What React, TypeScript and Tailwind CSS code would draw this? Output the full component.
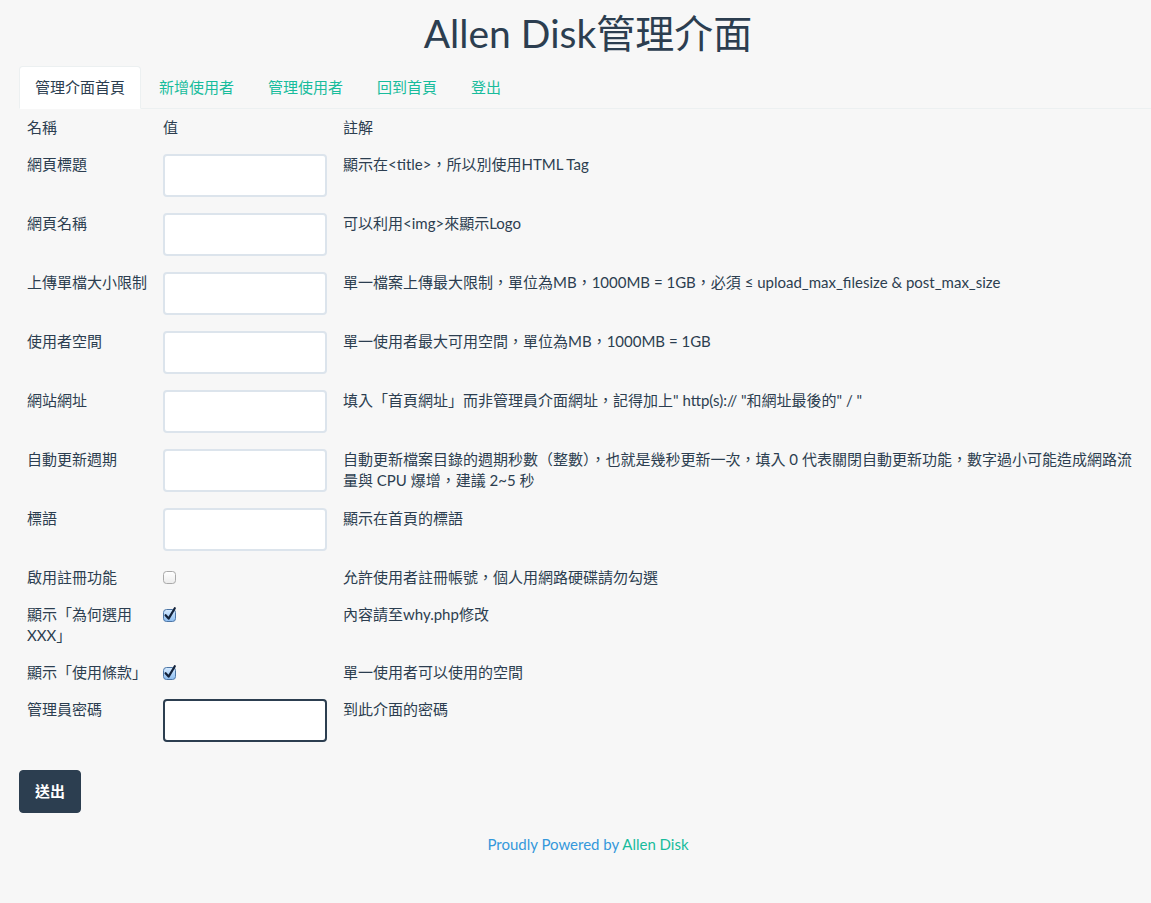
import React from "react";

const font = "font-['Lato','Noto_Sans_CJK_TC','Noto_Sans_CJK_JP',sans-serif]";

function Box({ checked }: { checked: boolean }) {
  if (!checked) {
    return (
      <svg width="14" height="14" viewBox="0 0 14 14" className="mt-[4px]">
        <defs>
          <linearGradient id="ub" x1="0" y1="0" x2="0" y2="1">
            <stop offset="0" stopColor="#ffffff" />
            <stop offset="1" stopColor="#ececec" />
          </linearGradient>
        </defs>
        <rect x="0.5" y="0.5" width="12" height="12" rx="3" fill="url(#ub)" stroke="#a9a9a9" />
      </svg>
    );
  }
  return (
    <svg width="16" height="16" viewBox="0 0 16 16" className="mt-[2px]">
      <defs>
        <linearGradient id="cb" x1="0" y1="0" x2="0" y2="1">
          <stop offset="0" stopColor="#d7ebff" />
          <stop offset="1" stopColor="#8dbdf0" />
        </linearGradient>
      </defs>
      <rect x="0.5" y="3.5" width="12" height="12" rx="3" fill="url(#cb)" stroke="#4d76a6" />
      <path d="M2.6 9.2 L5.6 12.6 L11.8 2.2" fill="none" stroke="#13223a" strokeWidth="2.2" strokeLinecap="round" strokeLinejoin="round" />
    </svg>
  );
}

function Field({ focus }: { focus?: boolean }) {
  return (
    <div
      className={`h-[43px] w-[164px] rounded-[4px] border-2 bg-white ${
        focus ? "border-[#2c3e50]" : "border-[#dce4ec]"
      }`}
    />
  );
}

type Row = {
  label: React.ReactNode;
  value: React.ReactNode;
  note: React.ReactNode;
};

const rows: Row[] = [
  { label: "網頁標題", value: <Field />, note: "顯示在<title>，所以別使用HTML Tag" },
  { label: "網頁名稱", value: <Field />, note: "可以利用<img>來顯示Logo" },
  {
    label: "上傳單檔大小限制",
    value: <Field />,
    note: "單一檔案上傳最大限制，單位為MB，1000MB = 1GB，必須 ≤ upload_max_filesize & post_max_size",
  },
  { label: "使用者空間", value: <Field />, note: "單一使用者最大可用空間，單位為MB，1000MB = 1GB" },
  {
    label: "網站網址",
    value: <Field />,
    note: "填入「首頁網址」而非管理員介面網址，記得加上\" http(s):// \"和網址最後的\" / \"",
  },
  {
    label: "自動更新週期",
    value: <Field />,
    note: (
      <>
        自動更新檔案目錄的週期秒數（整數），也就是幾秒更新一次，填入 0 代表關閉自動更新功能，數字過小可能造成網路流
        <br />
        量與 CPU 爆增，建議 2~5 秒
      </>
    ),
  },
  { label: "標語", value: <Field />, note: "顯示在首頁的標語" },
  { label: "啟用註冊功能", value: <Box checked={false} />, note: "允許使用者註冊帳號，個人用網路硬碟請勿勾選" },
  {
    label: (
      <>
        顯示「為何選用
        <br />
        XXX」
      </>
    ),
    value: <Box checked />,
    note: "內容請至why.php修改",
  },
  { label: "顯示「使用條款」", value: <Box checked />, note: "單一使用者可以使用的空間" },
  { label: "管理員密碼", value: <Field focus />, note: "到此介面的密碼" },
];

const tabs = ["管理介面首頁", "新增使用者", "管理使用者", "回到首頁", "登出"];

export default function App() {
  return (
    <div className={`min-h-[903px] overflow-hidden bg-[#f7f7f7] text-[15px] leading-[21px] text-[#2c3e50] ${font}`}>
      <div className="w-[1138px] pl-[19px] box-content">
        <h1 className="mt-[12px] mb-[11px] text-center text-[39px] leading-[43px] font-normal">
          Allen Disk管理介面
        </h1>

        <ul className="flex border-b border-[#ecf0f1] w-[1132px]">
          {tabs.map((t, i) => (
            <li key={t} className="-mb-px mr-[2px]">
              <a
                className={`block rounded-t-[4px] border px-[15px] py-[10px] ${
                  i === 0
                    ? "border-[#ecf0f1] border-b-transparent bg-white text-[#2c3e50]"
                    : "border-transparent text-[#18bc9c]"
                }`}
              >
                {t}
              </a>
            </li>
          ))}
        </ul>

        <div className="grid grid-cols-[136px_180px_1fr]">
          <div className="p-2">名稱</div>
          <div className="p-2">值</div>
          <div className="p-2">註解</div>
          {rows.map((r, i) => (
            <React.Fragment key={i}>
              <div className="whitespace-nowrap p-2">{r.label}</div>
              <div className="p-2">{r.value}</div>
              <div className="whitespace-nowrap p-2">{r.note}</div>
            </React.Fragment>
          ))}
        </div>

        <button className="mt-[20px] rounded-[4px] border border-[#2c3e50] bg-[#2c3e50] px-[15px] py-[10px] font-bold text-white">
          送出
        </button>

        <footer className="mt-[21px] pb-[40px] text-center">
          <span className="text-[#3498db]">Proudly Powered by </span>
          <a className="text-[#18bc9c]">Allen Disk</a>
        </footer>
      </div>
    </div>
  );
}
